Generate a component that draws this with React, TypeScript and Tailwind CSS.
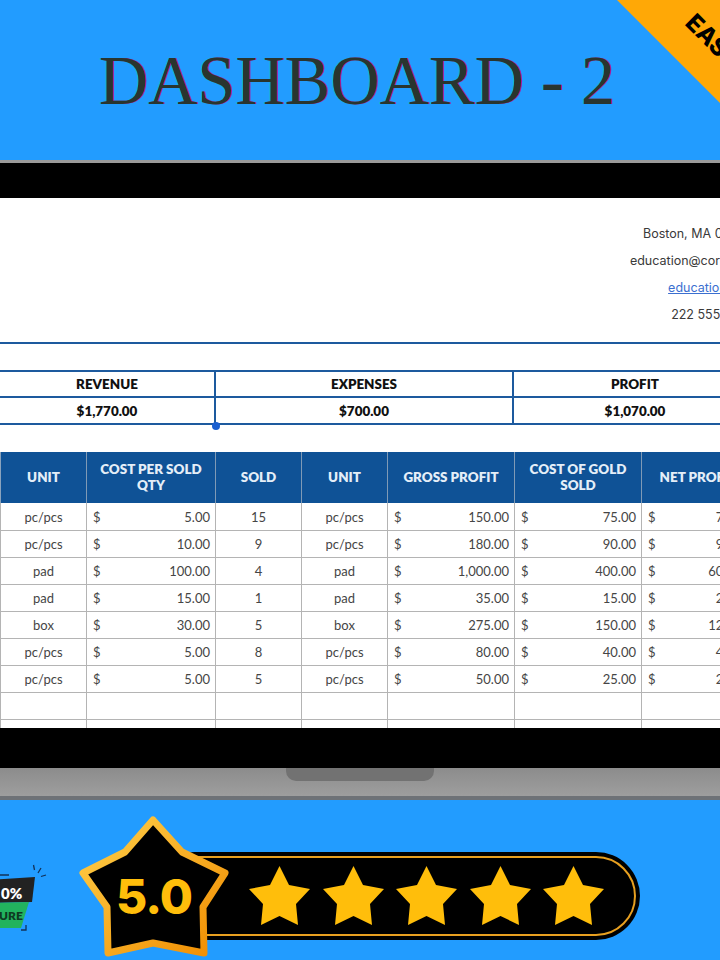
const cols = "grid grid-cols-[86px_129px_86px_86px_127px_127px_113px]";

const headers = ["UNIT", "COST PER SOLD QTY", "SOLD", "UNIT", "GROSS PROFIT", "COST OF GOLD SOLD", "NET PROFIT"];

const rows = [
  ["pc/pcs", "5.00", "15", "150.00", "75.00", "75.00"],
  ["pc/pcs", "10.00", "9", "180.00", "90.00", "90.00"],
  ["pad", "100.00", "4", "1,000.00", "400.00", "600.00"],
  ["pad", "15.00", "1", "35.00", "15.00", "20.00"],
  ["box", "30.00", "5", "275.00", "150.00", "125.00"],
  ["pc/pcs", "5.00", "8", "80.00", "40.00", "40.00"],
  ["pc/pcs", "5.00", "5", "50.00", "25.00", "25.00"],
];

const Money = ({ value }: { value: string }) => (
  <div className="flex items-center justify-between border-r border-b border-[#b4b4b4] pt-[2px] pl-[6px] pr-[5px]">
    <span>$</span>
    <span>{value}</span>
  </div>
);

const Plain = ({ value }: { value: string }) => (
  <div className="flex items-center justify-center pt-[2px] border-r border-b border-[#b4b4b4]">{value}</div>
);

const StarShape = () => (
  <svg width="61" height="60" viewBox="0 0 61 60" className="shrink-0">
    <polygon points="30.5,0 40,19 61,23 47,38 49,59 30.5,50 12,59 14,38 0,23 21,19" fill="#ffbe0b" />
  </svg>
);

export default function App() {
  return (
    <div className="relative w-[720px] h-[960px] overflow-hidden bg-[#229cff] font-['Inter',sans-serif]">
      {/* Title */}
      <header className="relative h-[160px] flex items-center justify-center">
        <h1 className="pr-[6px] pt-[2px] font-['Liberation_Serif',serif] text-[69px] leading-none text-[#29352f] scale-x-[0.99] [text-shadow:1px_0_0_#b0189c,-1px_0_0_#18b8c8]">
          DASHBOARD - 2
        </h1>
        <div className="absolute top-0 right-0 w-[103px] h-[103px] overflow-hidden bg-[#ffa806] [clip-path:polygon(0_0,100%_0,100%_100%)]">
          <span className="absolute left-[63px] top-[30px] rotate-45 origin-center font-['Inter',sans-serif] font-extrabold text-[24px] leading-none text-black">
            EASY
          </span>
        </div>
      </header>

      {/* Laptop screen */}
      <div className="h-[3px] bg-[#9a9a9a]" />
      <div className="h-[35px] bg-black" />
      <main className="relative h-[530px] overflow-hidden bg-white">
        <div className="h-[146px] border-b-2 border-[#1d5a9e] flex flex-col items-center pt-[27px] gap-[9px] w-[1424px] text-[12.5px] leading-[18px] text-[#3a3a3a]">
          <p className="h-[18px]">Boston, MA 02110, USA</p>
          <p className="h-[18px]">education@corporates.com</p>
          <p className="h-[18px] text-[#3b6fd0] underline">education.com</p>
          <p className="h-[18px]">222 555 7777</p>
        </div>

        <div className="relative mt-[26px] w-[800px] font-['Lato',sans-serif] font-extrabold text-[13.4px] text-[#111]">
          <div className="grid grid-cols-[216px_298px_286px] border-y-2 border-[#1d5a9e]">
            <div className="h-[26px] pt-[1px] flex items-center justify-center border-r-2 border-b-2 border-[#1d5a9e]">REVENUE</div>
            <div className="h-[26px] pt-[1px] flex items-center justify-center border-r-2 border-b-2 border-[#1d5a9e]">EXPENSES</div>
            <div className="h-[26px] pt-[1px] flex items-center justify-center pr-[44px] border-b-2 border-[#1d5a9e]">PROFIT</div>
            <div className="h-[25px] pt-[1px] flex items-center justify-center border-r-2 border-[#1d5a9e]">$1,770.00</div>
            <div className="h-[25px] pt-[1px] flex items-center justify-center border-r-2 border-[#1d5a9e]">$700.00</div>
            <div className="h-[25px] pt-[1px] flex items-center justify-center pr-[44px]">$1,070.00</div>
          </div>
          <span className="absolute left-[212px] bottom-[-5px] w-2 h-2 rounded-full bg-[#1a5fd0]" />
        </div>

        <div className="mt-[27px] w-[755px] font-['Lato',sans-serif] text-[13px] text-[#454545]">
          <div className={`${cols} h-[51px] bg-[#0f5296] border-l border-[#8aa3bd]`}>
            {headers.map((h, i) => (
              <div
                key={i}
                className="flex items-center justify-center text-center px-[10px] pb-[1px] border-r border-[#7f9ab6] font-extrabold text-[13.4px] leading-[16px] text-[#e4eef8]"
              >
                {h}
              </div>
            ))}
          </div>
          {rows.map((r, i) => (
            <div key={i} className={`${cols} ${i === 0 ? "h-[28px]" : "h-[27px]"} border-l border-[#b4b4b4]`}>
              <Plain value={r[0]} />
              <Money value={r[1]} />
              <Plain value={r[2]} />
              <Plain value={r[0]} />
              <Money value={r[3]} />
              <Money value={r[4]} />
              <Money value={r[5]} />
            </div>
          ))}
          {[0, 1].map((i) => (
            <div key={i} className={`${cols} h-[27px] border-l border-[#b4b4b4]`}>
              {headers.map((_, j) => (
                <div key={j} className="border-r border-b border-[#b4b4b4]" />
              ))}
            </div>
          ))}
        </div>
      </main>

      {/* Laptop base */}
      <div className="h-[40px] bg-black" />
      <div className="relative h-[28px] bg-gradient-to-b from-[#8c8c8c] to-[#9e9e9e]">
        <div className="absolute left-[286px] top-0 w-[148px] h-[13px] rounded-b-[10px] bg-[#727272]" />
      </div>
      <div className="h-[4px] bg-[#6e7277]" />

      {/* Rating */}
      <footer className="relative h-[160px] flex items-start">
        {/* Guarantee badge */}
        <svg width="48" height="70" viewBox="0 0 48 70" className="mt-[64px] shrink-0">
          <polygon points="-12,16 35,13 32,38 -12,39" fill="#222222" />
          <polygon points="-12,39 29,38 21,64 -12,64" fill="#22b35e" />
          <text x="1" y="35" fontFamily="Lato, sans-serif" fontWeight="800" fontSize="15" fill="#ffffff">0%</text>
          <text x="-1" y="56" fontFamily="Lato, sans-serif" fontWeight="800" fontSize="12" fill="#0e3b22">URE</text>
          <path d="M0 11 H9 M33.5 1 L34.5 6 M41 4 L38 9 M46 11 L41 12.5 M26 61 V66 H21" stroke="#12325a" strokeWidth="1.3" fill="none" />
        </svg>
        <div className="ml-[102px] mt-[52px] w-[490px] h-[88px] shrink-0 rounded-full bg-black p-[4px]">
          <div className="h-full rounded-full border-2 border-[#e8a020] flex items-center justify-end gap-[12.5px] pr-[30px]">
            {[0, 1, 2, 3, 4].map((i) => (
              <StarShape key={i} />
            ))}
          </div>
        </div>
        <div className="absolute left-[78px] top-[15px] w-[152px] h-[145px]">
          <svg width="152" height="145" viewBox="0 0 152 145">
            <defs>
              <linearGradient id="rim" x1="0" y1="0" x2="1" y2="1">
                <stop offset="0" stopColor="#ffd04a" />
                <stop offset="1" stopColor="#f08c00" />
              </linearGradient>
            </defs>
            <polygon
              points="75,5 104,37 147,58 125,92 126,138 75,128 30,138 29,92 5,58 47,37"
              fill="#000"
              stroke="url(#rim)"
              strokeWidth="7"
              strokeLinejoin="round"
            />
          </svg>
          <span className="absolute inset-x-0 top-[57px] text-center font-['Inter',sans-serif] font-extrabold text-[48px] leading-[50px] tracking-[-1px] text-[#ffbe0b]">
            5.0
          </span>
        </div>
      </footer>
    </div>
  );
}
